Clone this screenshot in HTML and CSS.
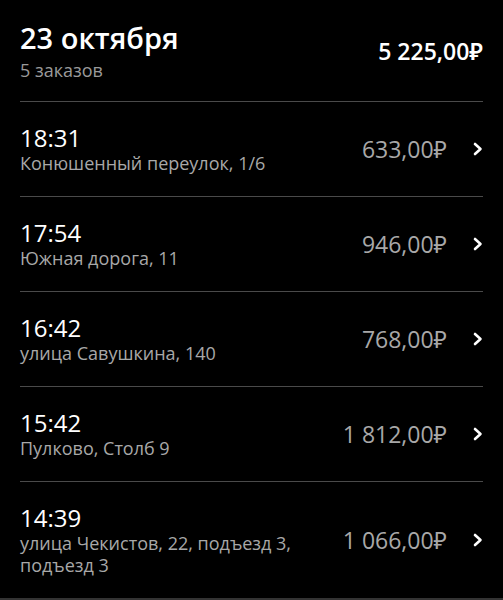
FILE: index.html
```html
<!DOCTYPE html>
<html lang="ru">
<head>
<meta charset="utf-8">
<link rel="stylesheet" href="styles.css">
</head>
<body>
<div class="screen">
  <header class="day">
    <div class="day-info">
      <div class="day-title">23 октября</div>
      <div class="day-count">5 заказов</div>
    </div>
    <div class="day-total">5 225,00₽</div>
  </header>
  <ul class="orders">
    <li class="order">
      <div class="order-info"><div class="order-time">18:31</div><div class="order-addr">Конюшенный переулок, 1/6</div></div>
      <div class="order-price">633,00₽</div>
      <svg class="chev" viewBox="0 0 10 14" width="10" height="14"><path d="M2 2 L7.5 7 L2 12" /></svg>
    </li>
    <li class="order">
      <div class="order-info"><div class="order-time">17:54</div><div class="order-addr">Южная дорога, 11</div></div>
      <div class="order-price">946,00₽</div>
      <svg class="chev" viewBox="0 0 10 14" width="10" height="14"><path d="M2 2 L7.5 7 L2 12" /></svg>
    </li>
    <li class="order">
      <div class="order-info"><div class="order-time">16:42</div><div class="order-addr">улица Савушкина, 140</div></div>
      <div class="order-price">768,00₽</div>
      <svg class="chev" viewBox="0 0 10 14" width="10" height="14"><path d="M2 2 L7.5 7 L2 12" /></svg>
    </li>
    <li class="order">
      <div class="order-info"><div class="order-time">15:42</div><div class="order-addr">Пулково, Столб 9</div></div>
      <div class="order-price">1 812,00₽</div>
      <svg class="chev" viewBox="0 0 10 14" width="10" height="14"><path d="M2 2 L7.5 7 L2 12" /></svg>
    </li>
    <li class="order">
      <div class="order-info"><div class="order-time">14:39</div><div class="order-addr">улица Чекистов, 22, подъезд 3, подъезд 3</div></div>
      <div class="order-price">1 066,00₽</div>
      <svg class="chev" viewBox="0 0 10 14" width="10" height="14"><path d="M2 2 L7.5 7 L2 12" /></svg>
    </li>
  </ul>
  <div class="bottom-bar"></div>
</div>
</body>
</html>
```
FILE: styles.css
```css
* { box-sizing: border-box; }
html, body { margin: 0; padding: 0; background: #000; }
body { font-family: "Open Sans", "Noto Sans", sans-serif; color: #fff; }
.screen { width: 503px; height: 600px; display: flex; flex-direction: column; overflow: hidden; }
.day { display: flex; align-items: center; justify-content: space-between; margin: 0 20px; padding: 21px 0 20px; border-bottom: 1px solid #4a4a4a; }
.day-title { font-size: 29px; font-weight: 600; line-height: 34px; color: #fff; }
.day-count { font-size: 18px; line-height: 22px; margin-top: 4px; color: #9a9a9a; }
.day-total { font-size: 23px; font-weight: 600; line-height: 30px; }
.orders { list-style: none; margin: 0; padding: 0; flex: 1; }
.order { display: flex; align-items: center; margin: 0 20px; padding: 22px 0; border-bottom: 1px solid #4a4a4a; }
.order:last-child { border-bottom: none; }
.order-info { flex: 1; min-width: 0; margin-right: 20px; }
.order-time { font-size: 24px; line-height: 28px; color: #fff; }
.order-addr { font-size: 18px; line-height: 22px; color: #a8a8a8; }
.order-price { font-size: 23px; line-height: 28px; color: #a8a8a8; white-space: nowrap; margin-right: 26px; }
.chev { flex: none; fill: none; stroke: #fff; stroke-width: 2.6; stroke-linecap: round; stroke-linejoin: round; }
.bottom-bar { height: 3px; background: #333; flex: none; }
```
